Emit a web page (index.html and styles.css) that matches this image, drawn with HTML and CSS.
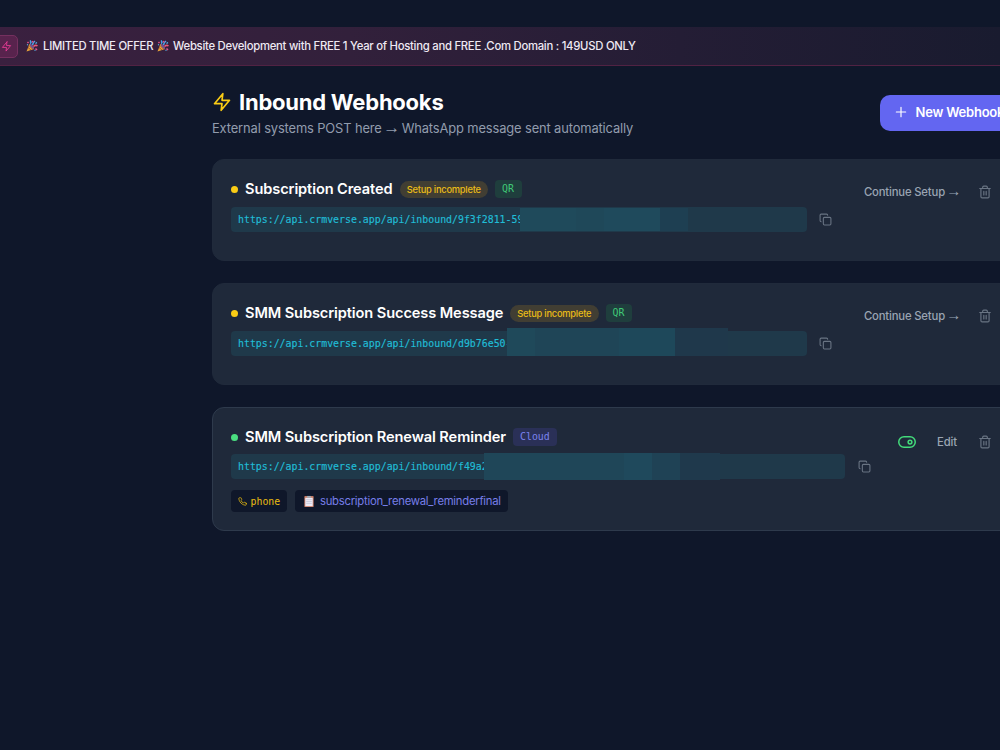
FILE: index.html
```html
<!DOCTYPE html>
<html lang="en">
<head>
<meta charset="utf-8">
<title>Inbound Webhooks</title>
<link rel="stylesheet" href="styles.css">
</head>
<body>
<svg width="0" height="0" class="defs" aria-hidden="true">
  <symbol id="zap" viewBox="0 0 24 24"><path d="M13 2 3 14h9l-1 8 10-12h-9l1-8z"/></symbol>
  <symbol id="copy" viewBox="0 0 24 24"><rect x="8" y="8" width="14" height="14" rx="2"/><path d="M4 16c-1.100 0-2-.9-2-2V4c0-1.100.9-2 2-2h10c1.100 0 2 .9 2 2"/></symbol>
  <symbol id="trash" viewBox="0 0 24 24"><path d="M3 6h18M19 6v14c0 1-1 2-2 2H7c-1 0-2-1-2-2V6M8 6V4c0-1 1-2 2-2h4c1 0 2 1 2 2v2M10 11v6M14 11v6"/></symbol>
  <symbol id="phone" viewBox="0 0 24 24"><path d="M22 16.920v3a2 2 0 0 1-2.180 2 19.790 19.790 0 0 1-8.630-3.070 19.500 19.500 0 0 1-6-6 19.790 19.790 0 0 1-3.070-8.670A2 2 0 0 1 4.110 2h3a2 2 0 0 1 2 1.720c.13.96.36 1.900.7 2.810a2 2 0 0 1-.45 2.110L8.090 9.910a16 16 0 0 0 6 6l1.270-1.270a2 2 0 0 1 2.110-.45c.91.34 1.850.57 2.810.7A2 2 0 0 1 22 16.920z"/></symbol>
  <symbol id="party" viewBox="0 0 24 24">
    <path d="M1 23 7 8q8 2 9 10z" fill="#e8a33a"/>
    <path d="M4 15l6 5M6 11l8 8" stroke="#a85b24" stroke-width="2"/>
    <ellipse cx="12" cy="13" rx="2.500" ry="6" transform="rotate(-42 12 13)" fill="#74508f"/>
    <path d="M8 7Q12 5 8 1M13 10q1-5 5-8" fill="none" stroke="#49a6ed" stroke-width="3"/>
    <path d="M15 13q4-4 8-1" fill="none" stroke="#ec5a78" stroke-width="3"/>
    <path d="M12 3l3 1M3 4l2 2M19 17l3 3" stroke="#e7518d" stroke-width="3"/>
    <path d="M19 7l3-2M2 9l2 1M17 20l2 1" stroke="#52bcec" stroke-width="2.500"/>
  </symbol>
</svg>

<div class="banner">
  <span class="banner-icon"><svg class="icon"><use href="#zap"/></svg></span>
  <p class="banner-text"><svg class="party"><use href="#party"/></svg><span class="offer">LIMITED TIME OFFER</span><svg class="party"><use href="#party"/></svg><span class="offer-detail">Website Development with FREE 1 Year of Hosting and FREE .Com Domain : 149USD ONLY</span></p>
</div>

<main class="page">
  <header class="header">
    <div>
      <h1 class="heading"><svg class="icon heading-icon"><use href="#zap"/></svg><span>Inbound Webhooks</span></h1>
      <p class="subtitle">External systems POST here <span class="arrow">→</span> WhatsApp message sent automatically</p>
    </div>
    <button class="new-button"><svg class="icon plus" viewBox="0 0 24 24"><path d="M12 4v16M4 12h16"/></svg><span>New Webhook</span></button>
  </header>

  <section class="card">
    <div class="body">
      <div class="title-row"><i class="dot"></i><h2 class="title t1">Subscription Created</h2><span class="pill">Setup incomplete</span><span class="tag qr">QR</span></div>
      <div class="url-row"><div class="url"><code>https://api.crmverse.app/api/inbound/9f3f2811-59</code>
        <div class="mask mask-a"><i></i><i></i><i></i><i></i></div></div><svg class="icon copy"><use href="#copy"/></svg></div>
    </div>
    <div class="actions"><span class="setup">Continue Setup <span class="arrow">→</span></span><svg class="icon trash"><use href="#trash"/></svg></div>
  </section>

  <section class="card">
    <div class="body">
      <div class="title-row"><i class="dot"></i><h2 class="title t2">SMM Subscription Success Message</h2><span class="pill">Setup incomplete</span><span class="tag qr">QR</span></div>
      <div class="url-row"><div class="url"><code>https://api.crmverse.app/api/inbound/d9b76e50-</code>
        <div class="mask mask-b"><i></i><i></i><i></i><i></i></div></div><svg class="icon copy"><use href="#copy"/></svg></div>
    </div>
    <div class="actions"><span class="setup">Continue Setup <span class="arrow">→</span></span><svg class="icon trash"><use href="#trash"/></svg></div>
  </section>

  <section class="card active">
    <div class="body">
      <div class="title-row"><i class="dot"></i><h2 class="title t3">SMM Subscription Renewal Reminder</h2><span class="tag cloud">Cloud</span></div>
      <div class="url-row"><div class="url"><code>https://api.crmverse.app/api/inbound/f49a2</code>
        <div class="mask mask-c"><i></i><i></i><i></i><i></i></div></div><svg class="icon copy"><use href="#copy"/></svg></div>
      <div class="chips">
        <span class="chip phone"><svg class="icon"><use href="#phone"/></svg><span>phone</span></span>
        <span class="chip template"><svg class="clipboard" viewBox="0 0 12 14"><rect x="1" y="1" width="10" height="12" rx="1" fill="#c67b65"/><path d="M2 3h8v9H2z" fill="#eeeaf5"/><path d="M4 1h4v2H4z" fill="#9eaab5"/><path d="M3 5h6M3 7h6M3 9h6" stroke="#b9bed0" stroke-width=".7"/></svg><span>subscription_renewal_reminderfinal</span></span>
      </div>
    </div>
    <div class="actions"><svg class="icon toggle" viewBox="0 0 24 24"><rect x="1" y="5" width="22" height="14" rx="7"/><circle cx="16" cy="12" r="2.500"/></svg><span class="edit">Edit</span><svg class="icon trash"><use href="#trash"/></svg></div>
  </section>
</main>
</body>
</html>
```

FILE: styles.css
```css
* { box-sizing: border-box; }
html { overflow: hidden; }
body { margin: 0; width: 1000px; height: 750px; overflow: hidden; background: #0f172a; color: #fff; font-family: Inter, sans-serif; padding-top: 27px; }
.defs { position: absolute; }
h1, h2, p { margin: 0; }
svg { display: block; flex: none; }
.icon { fill: none; stroke: currentColor; stroke-width: 2; stroke-linecap: round; stroke-linejoin: round; }
.arrow { display: inline-block; font-family: "Liberation Sans", sans-serif; font-weight: 400; line-height: 0; letter-spacing: 0; }

.banner { height: 39px; display: flex; align-items: center; gap: 8px; border-bottom: 1px solid #512243; background: linear-gradient(90deg, #3a203f 0, #32203b 350px, #241d35 680px, #191b2f 1000px); }
.banner-icon { width: 23px; height: 23px; margin-left: -5px; display: grid; place-items: center; border: 1px solid #75305f; border-radius: 5px; background: #58234d; color: #e53b94; }
.banner-icon .icon { width: 11px; height: 11px; }
.banner-text { display: flex; align-items: center; font-size: 11.300px; letter-spacing: -.26px; font-weight: 500; line-height: 16px; color: #eee9f3; white-space: nowrap; }
.party { width: 12px; height: 12px; }
.offer { width: 109px; margin: 0 5px; }
.offer-detail { margin-left: 4px; }

.page { width: 860px; margin-left: 212px; padding-top: 23px; }
.header { height: 70px; display: flex; justify-content: space-between; width: 808px; }
.heading { display: flex; align-items: center; gap: 7px; height: 26px; font-size: 22px; letter-spacing: -.23px; line-height: 26px; font-weight: 700; }
.heading span { padding-bottom: 1px; }
.heading-icon { width: 20px; height: 20px; color: #facc15; }
.subtitle { margin-top: 5px; color: #929cad; font-size: 12.900px; letter-spacing: -.13px; line-height: 18px; white-space: nowrap; }
.subtitle .arrow { width: 13px; font-size: 17px; text-indent: -2px; }
.new-button { width: 140px; height: 36px; margin-top: 5.500px; padding: 0 0 1px 14px; display: flex; align-items: center; gap: 7.500px; border: 0; border-radius: 10px; background: #6366f1; color: #fff; font: 600 13px Inter, sans-serif; letter-spacing: -.22px; white-space: nowrap; }
.plus { width: 14px; height: 14px; }

.card { height: 102px; margin-bottom: 22px; padding: 18px; display: flex; justify-content: space-between; border: 1px solid #202a3b; border-radius: 12px; background: #1f293a; }
.active { height: 124px; border-color: #2e3a4c; }
.body { width: 640px; }
.title-row { height: 22px; display: flex; align-items: center; }
.dot { width: 7px; height: 7px; border-radius: 50%; background: #facc15; }
.active .dot { background: #4ade80; }
.title { margin-left: 7px; font-size: 14.600px; letter-spacing: -.1px; line-height: 20px; font-weight: 600; white-space: nowrap; }
.t1 { width: 147.500px; }
.t2 { width: 258px; }
.t3 { width: 261px; }
.pill { width: 88.500px; height: 17px; margin-left: 7px; border-radius: 9px; background: #413e33; color: #eabc17; font-size: 9.300px; letter-spacing: -.23px; font-weight: 500; line-height: 17px; text-align: center; white-space: nowrap; }
.tag { height: 18px; margin-left: 7px; padding: 0 7px; border-radius: 4px; font: 9.900px/18px "DejaVu Sans Mono", monospace; }
.qr { width: 26.500px; background: #1f3e3d; color: #3fca77; }
.cloud { background: #2a3057; color: #7b83ef; }
.url-row { display: flex; align-items: center; gap: 12px; margin-top: 7px; }
.active .url-row { margin-top: 6px; }
.url { position: relative; width: 576px; height: 25px; padding-left: 7px; border-radius: 4px; background: #1f394a; color: #20bdd6; }
.active .url { width: 614px; }
.active .url-row { gap: 13px; }
.url code { display: block; font: 9.900px/25px "DejaVu Sans Mono", monospace; -webkit-text-stroke: .15px currentColor; white-space: nowrap; }
.copy { width: 13px; height: 13px; color: #697483; }
.mask { position: absolute; display: flex; }
.mask i { height: 100%; }
.mask-a { left: 289px; top: 1px; height: 23px; }
.mask-a i:nth-child(1) { width: 56px; background: #1f4a5b; }
.mask-a i:nth-child(2) { width: 28px; background: #1f4859; }
.mask-a i:nth-child(3) { width: 56px; background: #1f4a5c; }
.mask-a i:nth-child(4) { width: 28px; background: #1e3f52; }
.mask-b { left: 276px; top: -3px; height: 28px; }
.mask-b i:nth-child(1) { width: 28px; background: #1f495a; }
.mask-b i:nth-child(2) { width: 84px; background: #1f4557; }
.mask-b i:nth-child(3) { width: 56px; background: #1e485a; }
.mask-b i:nth-child(4) { width: 53px; background: #1f384b; }
.mask-c { left: 253px; top: -1px; height: 27px; }
.mask-c i:nth-child(1) { width: 140px; background: #1f4658; }
.mask-c i:nth-child(2) { width: 28px; background: #1f495c; }
.mask-c i:nth-child(3) { width: 28px; background: #1f4255; }
.mask-c i:nth-child(4) { width: 40px; background: #1f394c; }
.actions { width: 129.500px; margin-right: 61px; display: flex; align-items: center; justify-content: space-between; height: 28px; color: #9aa4b2; font-size: 11.300px; letter-spacing: -.17px; font-weight: 500; white-space: nowrap; }
.setup .arrow { width: 12px; font-size: 15px; text-indent: -1.500px; }
.trash { width: 14px; height: 14px; color: #697483; }
.active .actions { width: 94px; height: 32px; }
.toggle { width: 18px; height: 18px; color: #43db7b; }
.chips { display: flex; gap: 8px; margin-top: 11px; }
.chip { height: 22px; display: flex; align-items: center; border-radius: 4px; background: #0f172a; white-space: nowrap; }
.phone { width: 56px; padding-left: 7px; gap: 3.500px; color: #eabc12; font: 9.900px "DejaVu Sans Mono", monospace; }
.phone .icon { width: 9px; height: 9px; }
.template { width: 213px; padding-left: 8px; gap: 5px; color: #777ee9; font-size: 11.300px; letter-spacing: -.26px; }
.clipboard { width: 12px; height: 13px; }
```
